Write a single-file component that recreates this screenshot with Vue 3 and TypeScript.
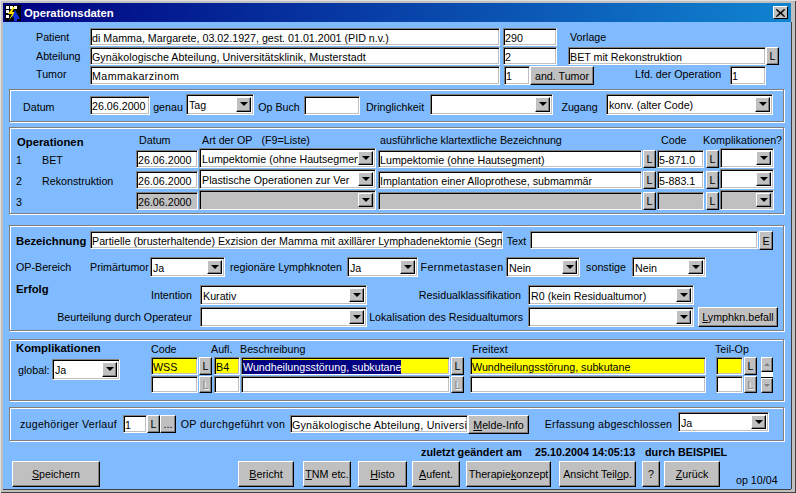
<script setup lang="ts">
interface OpRow {
  num: string
  name: string
  art: string
  text: string
  code: string
  disabled: boolean
}

const ops: OpRow[] = [
  { num: '1', name: 'BET', art: 'Lumpektomie (ohne Hautsegment)', text: 'Lumpektomie (ohne Hautsegment)', code: '5-871.0', disabled: false },
  { num: '2', name: 'Rekonstruktion', art: 'Plastische Operationen zur Ver', text: 'Implantation einer Alloprothese, submammär', code: '5-883.1', disabled: false },
  { num: '3', name: '', art: '', text: '', code: '', disabled: true },
]
</script>

<template>
  <div class="window">
    <div class="titlebar">
      <svg class="app-icon" width="16" height="16" viewBox="0 0 16 16">
        <rect width="16" height="16" fill="#000" />
        <path d="M1 1h3v3H1zM5 1h3v3H5zM9 1h3v3H9zM1 5h3v3H1zM1 10h3v3H1z" fill="#fff" />
        <path d="M8 2 3 9h4l-3 6 7-8H7l3-5z" fill="#ffe000" />
        <path d="M10 5l5 9-3 0 0 2-3 0 0-4-2 1z" fill="#1030e0" />
      </svg>
      <span class="title-text">Operationsdaten</span>
      <div class="close">
        <svg width="9" height="8" viewBox="0 0 9 8"><path d="M0.5 0 4.5 3.2 8.5 0 8.5 1 5.5 4 8.5 7 8.5 8 4.5 4.8 0.5 8 0.5 7 3.5 4 0.5 1z" fill="#000" stroke="#000" stroke-width=".6" /></svg>
      </div>
    </div>

    <div class="content">
      <div class="top">
        <div class="row r-top1">
          <div class="lbl pl33">Patient</div>
          <div class="field">di Mamma, Margarete, 03.02.1927, gest. 01.01.2001 (PID n.v.)</div>
          <div class="field ml3">290</div>
          <div class="lbl pl13">Vorlage</div>
        </div>
        <div class="row r-top2">
          <div class="lbl pl33">Abteilung</div>
          <div class="field wide1">Gynäkologische Abteilung, Universitätsklinik, Musterstadt</div>
          <div class="field ml3">2</div>
          <div class="field ml11">BET mit Rekonstruktion</div>
          <div class="btn">L</div>
        </div>
        <div class="row r-top3">
          <div class="lbl pl33 raise">Tumor</div>
          <div class="field wide4">Mammakarzinom</div>
          <div class="field ml4">1</div>
          <div class="btn">and. Tumor</div>
          <div class="lbl pl41 raise">Lfd. der Operation</div>
          <div class="field">1</div>
        </div>
      </div>

      <section class="panel p-datum">
        <div class="row r-datum">
          <div class="lbl pl12">Datum</div>
          <div class="field low">26.06.2000</div>
          <div class="lbl c">genau</div>
          <div class="combo"><span class="combo-text">Tag</span><i class="arrow"></i></div>
          <div class="lbl c">Op Buch</div>
          <div class="field low"></div>
          <div class="lbl c">Dringlichkeit</div>
          <div class="combo"><span class="combo-text"></span><i class="arrow"></i></div>
          <div class="lbl c">Zugang</div>
          <div class="combo"><span class="combo-text">konv. (alter Code)</span><i class="arrow"></i></div>
        </div>
      </section>

      <section class="panel p-ops">
        <div class="row r-ops-head">
          <div class="lbl strong pl6 pt5">Operationen</div>
          <div class="lbl pl3">Datum</div>
          <div class="lbl pl3">Art der OP <span class="f9">(F9=Liste)</span></div>
          <div class="lbl">ausführliche klartextliche Bezeichnung</div>
          <div class="lbl pl3">Code</div>
          <div class="lbl">Komplikationen?</div>
        </div>
        <div v-for="op in ops" :key="op.num" class="row r-ops" :class="{ off: op.disabled }">
          <div class="lbl pl5">{{ op.num }}</div>
          <div class="lbl">{{ op.name }}</div>
          <div class="field inrow">26.06.2000</div>
          <div class="combo ml1"><span class="combo-text">{{ op.art }}</span><i class="arrow"></i></div>
          <div class="field inrow ml2">{{ op.text }}</div>
          <div class="btn inrow ml1">L</div>
          <div class="field inrow ml1">{{ op.code }}</div>
          <div class="btn inrow ml2">L</div>
          <div class="combo ml1"><span class="combo-text"></span><i class="arrow"></i></div>
        </div>
      </section>

      <section class="panel p-bez">
        <div class="row r-bez1">
          <div class="lbl strong pl5">Bezeichnung</div>
          <div class="field">Partielle (brusterhaltende) Exzision der Mamma mit axillärer Lymphadenektomie (Segmentresektion)</div>
          <div class="lbl c">Text</div>
          <div class="field"></div>
          <div class="btn ml1">E</div>
        </div>
        <div class="row r-bez2">
          <div class="lbl pl5">OP-Bereich</div>
          <div class="lbl">Primärtumor</div>
          <div class="combo"><span class="combo-text">Ja</span><i class="arrow"></i></div>
          <div class="lbl c">regionäre Lymphknoten</div>
          <div class="combo"><span class="combo-text">Ja</span><i class="arrow"></i></div>
          <div class="lbl c wide4">Fernmetastasen</div>
          <div class="combo"><span class="combo-text">Nein</span><i class="arrow"></i></div>
          <div class="lbl c">sonstige</div>
          <div class="combo"><span class="combo-text">Nein</span><i class="arrow"></i></div>
        </div>
        <div class="row r-bez3">
          <div class="lbl strong pl5 erfolg">Erfolg</div>
          <div class="lbl r8">Intention</div>
          <div class="combo"><span class="combo-text">Kurativ</span><i class="arrow"></i></div>
          <div class="lbl r7">Residualklassifikation</div>
          <div class="combo"><span class="combo-text">R0 (kein Residualtumor)</span><i class="arrow"></i></div>
        </div>
        <div class="row r-bez4">
          <div class="lbl r8">Beurteilung durch Operateur</div>
          <div class="combo"><span class="combo-text"></span><i class="arrow"></i></div>
          <div class="lbl r5">Lokalisation des Residualtumors</div>
          <div class="combo"><span class="combo-text"></span><i class="arrow"></i></div>
          <div class="btn ml4"><span><u>L</u>ymphkn.befall</span></div>
        </div>
      </section>

      <section class="panel p-kompl">
        <div class="kompl-left">
          <div class="lbl strong kompl-title">Komplikationen</div>
          <div class="row r-global">
            <div class="lbl">global:</div>
            <div class="combo"><span class="combo-text">Ja</span><i class="arrow"></i></div>
          </div>
        </div>
        <div class="kompl-right">
          <div class="row r-kompl-head">
            <div class="lbl">Code</div>
            <div class="lbl">Aufl.</div>
            <div class="lbl">Beschreibung</div>
            <div class="lbl">Freitext</div>
            <div class="lbl">Teil-Op</div>
          </div>
          <div class="kompl-body">
            <div class="kompl-rows">
              <div class="row r-kompl">
                <div class="field hl">WSS</div>
                <div class="btn ml1">L</div>
                <div class="field hl ml2">B4</div>
                <div class="field hl ml1"><span class="sel">Wundheilungsstörung, subkutane</span></div>
                <div class="btn ml1">L</div>
                <div class="field hl ml6">Wundheilungsstörung, subkutane</div>
                <div class="field hl ml10"></div>
                <div class="btn ml1">L</div>
              </div>
              <div class="row r-kompl r-kompl2">
                <div class="field"></div>
                <div class="btn ml1 dim">L</div>
                <div class="field ml2"></div>
                <div class="field ml1"></div>
                <div class="btn ml1 dim">L</div>
                <div class="field ml6"></div>
                <div class="field ml10"></div>
                <div class="btn ml1 dim">L</div>
              </div>
            </div>
            <div class="scroll">
              <div class="btn sb-btn"><i class="tri up"></i></div>
              <div class="sb-track"></div>
              <div class="btn sb-btn"><i class="tri down"></i></div>
            </div>
          </div>
        </div>
      </section>

      <section class="panel p-verlauf">
        <div class="row r-verlauf">
          <div class="lbl pl9 wide2">zugehöriger Verlauf</div>
          <div class="field low1">1</div>
          <div class="btn low1">L</div>
          <div class="btn low1">...</div>
          <div class="lbl c wide3">OP durchgeführt von</div>
          <div class="field low1 wide2">Gynäkologische Abteilung, Universitätsklinik</div>
          <div class="btn lowb"><span><u>M</u>elde-Info</span></div>
          <div class="lbl c wide2 erfassung">Erfassung abgeschlossen</div>
          <div class="combo"><span class="combo-text">Ja</span><i class="arrow"></i></div>
        </div>
      </section>

      <div class="status">
        <span class="st-a">zuletzt geändert am</span>
        <span class="st-b">25.10.2004 14:05:13</span>
        <span>durch BEISPIEL</span>
      </div>

      <div class="row r-actions">
        <div class="btn"><span><u>S</u>peichern</span></div>
        <div></div>
        <div class="btn"><span><u>B</u>ericht</span></div>
        <div class="btn ml9"><span><u>T</u>NM etc.</span></div>
        <div class="btn ml7"><span><u>H</u>isto</span></div>
        <div class="btn ml5"><span><u>A</u>ufent.</span></div>
        <div class="btn ml6"><span>Therapie<u>k</u>onzept</span></div>
        <div class="btn ml8"><span>Ansicht Teil<u>o</u>p.</span></div>
        <div class="btn ml6">?</div>
        <div class="btn ml4"><span><u>Z</u>urück</span></div>
        <div class="lbl version">op 10/04</div>
      </div>
    </div>
  </div>
</template>

<style>
html, body { margin: 0; padding: 0; background: #c0c0c0; }
</style>

<style scoped>
.window {
  box-sizing: border-box;
  width: 796px;
  height: 493px;
  padding: 3px 5px 3px 3px;
  background: #c0c0c0;
  box-shadow: inset 1px 1px 0 #dfdfdf, inset -1px -1px 0 #404040;
  font: 10.7px/14px "Liberation Sans", Arial, sans-serif;
  color: #000;
  overflow: hidden;
}
.titlebar {
  display: flex;
  align-items: center;
  height: 19px;
  background: linear-gradient(90deg, #000080, #1084d0);
  color: #fff;
  padding: 0 3px 0 2px;
}
.app-icon { flex: none; }
.title-text { margin-left: 3px; font-weight: bold; font-size: 11.3px; }
.close {
  margin-left: auto;
  box-sizing: border-box;
  width: 15px;
  height: 13px;
  display: flex;
  align-items: center;
  justify-content: center;
  background: #c0c0c0;
  border: 1px solid;
  border-color: #fff #000 #000 #fff;
}
.content {
  height: 467px;
  background: #80bbff;
  box-shadow: 1px 0 0 #404040, 0 1px 0 #404040;
  padding-top: 6px;
  box-sizing: border-box;
}
.row { display: grid; }
.row > * { min-width: 0; }

.lbl { white-space: nowrap; display: flex; align-items: center; }
.lbl.strong { font-weight: bold; font-size: 11.3px; }
.c { justify-content: center; }
.r8, .r7, .r5 { justify-content: flex-end; }
.r8 { padding-right: 8px; }
.r7 { padding-right: 7px; }
.r5 { padding-right: 5px; }
.pl3 { padding-left: 3px; }
.pl5 { padding-left: 5px; }
.pl6 { padding-left: 6px; }
.pl9 { padding-left: 9px; }
.pl12 { padding-left: 12px; }
.pl13 { padding-left: 13px; }
.pl33 { padding-left: 33px; }
.pl41 { padding-left: 41px; }
.pt5 { padding-top: 5px; }
.raise { padding-bottom: 3px; }
.ml1 { margin-left: 1px; }
.ml2 { margin-left: 2px; }
.ml3 { margin-left: 3px; }
.ml4 { margin-left: 4px; }
.ml5 { margin-left: 5px; }
.ml6 { margin-left: 6px; }
.ml7 { margin-left: 7px; }
.ml8 { margin-left: 8px; }
.ml9 { margin-left: 9px; }
.ml10 { margin-left: 10px; }
.ml11 { margin-left: 11px; }
.wide1 { letter-spacing: .06px; }
.wide2 { letter-spacing: .22px; }
.wide3 { letter-spacing: .32px; }
.wide4 { letter-spacing: .42px; }
.r-verlauf .erfassung { padding-left: 10px; }

.field {
  box-sizing: border-box;
  background: #fff;
  border: 1px solid;
  border-color: #808080 #fff #fff #808080;
  box-shadow: inset 1px 1px 0 #000, inset -1px -1px 0 #c0c0c0;
  padding: 1px 0 0 1px;
  display: flex;
  align-items: center;
  white-space: nowrap;
  overflow: hidden;
}
.field.hl { background: #ffff00; }
.sel { background: #000080; color: #fff; }

.btn {
  box-sizing: border-box;
  background: #c0c0c0;
  border: 1px solid;
  border-color: #fff #000 #000 #fff;
  box-shadow: inset -1px -1px 0 #808080;
  display: flex;
  align-items: center;
  justify-content: center;
  white-space: nowrap;
}
.btn.dim { color: #808080; text-shadow: 1px 1px 0 #fff; }

.combo {
  box-sizing: border-box;
  background: #fff;
  border: 1px solid;
  border-color: #808080 #fff #fff #808080;
  box-shadow: inset 1px 1px 0 #000, inset -1px -1px 0 #c0c0c0;
  padding: 2px;
  display: flex;
  align-items: center;
  min-width: 0;
  height: 20px;
}
.combo-text { flex: 1; min-width: 0; overflow: hidden; white-space: nowrap; padding-top: 1px; }
.arrow {
  flex: none;
  box-sizing: border-box;
  align-self: stretch;
  width: 15px;
  background: #c0c0c0;
  border: 1px solid;
  border-color: #fff #000 #000 #fff;
  box-shadow: inset -1px -1px 0 #808080;
  position: relative;
}
.arrow::after {
  content: "";
  position: absolute;
  left: 2.5px;
  top: 4px;
  border: 4px solid transparent;
  border-top: 4px solid #000;
  border-bottom: 0;
}

.panel {
  box-sizing: border-box;
  width: 775px;
  margin-left: 6px;
  border: 1px solid #808080;
  outline: 0;
  box-shadow: inset 1px 1px 0 #fff, 1px 1px 0 #fff;
  padding: 1px;
}

.top .row { margin-bottom: 1px; }
.r-top1 { height: 18px; grid-template-columns: 87px 410px 57px 1fr; }
.r-top2 { height: 18px; grid-template-columns: 87px 410px 57px 209px 13px; }
.r-top3 { height: 19px; grid-template-columns: 87px 410px 30px 64px 136px 36px; }

.p-datum { height: 33px; margin-top: 4px; padding-top: 4px; }
.r-datum { height: 22px; grid-template-columns: 79px 60px 36px 68px 50px 56px 70px 123px 53px 167px; align-items: start; }
.r-datum .lbl { align-self: stretch; padding-top: 3px; }
.r-datum .combo { height: 21px; }
.low { height: 19px; margin-top: 2px; }

.p-ops { height: 87px; margin-top: 5px; }
.r-ops-head { height: 18px; padding-top: 1px; grid-template-columns: 125px 63px 181px 278px 45px 1fr; }
.f9 { margin-left: 9px; }
.r-ops { height: 21px; grid-template-columns: 31px 94px 62px 178px 266px 14px 48px 15px 55px; align-items: start; }
.r-ops .lbl { align-self: stretch; padding-top: 3px; }
.inrow { height: 18px; margin-top: 2px; }
.r-ops.off .field, .r-ops.off .combo { background: #c0c0c0; }

.p-bez { height: 106px; margin-top: 11px; padding-top: 5px; }
.r-bez1 { height: 19px; grid-template-columns: 79px 413px 27px 228px 15px; }
.r-bez1 .field { height: 18px; }
.r-bez2 { height: 20px; margin-top: 7px; grid-template-columns: 79px 60px 75px 122px 71px 88px 74px 52px 74px; }
.r-bez3 { height: 24px; margin-top: 4px; grid-template-columns: 81px 108px 167px 161px 166px; align-items: end; }
.r-bez3 .lbl { height: 20px; }
.r-bez3 .erfolg { height: 16px; align-self: start; }
.r-bez4 { height: 20px; margin-top: 2px; grid-template-columns: 189px 167px 161px 166px 84px; }

.p-kompl { height: 62px; margin-top: 8px; display: flex; }
.kompl-left { width: 140px; flex: none; }
.kompl-title { padding-left: 5px; height: 14px; }
.r-global { margin-top: 4px; padding-left: 7px; grid-template-columns: 34px 68px; }
.r-global .combo { height: 21px; }
.r-kompl-head { height: 16px; grid-template-columns: 60px 29px 232px 243px 1fr; }
.kompl-body { display: flex; }
.r-kompl { height: 18px; grid-template-columns: 47px 14px 28px 210px 14px 242px 37px 14px; }
.r-kompl2 { height: 17px; margin-top: 1px; }
.scroll { margin-left: 4px; width: 12px; display: flex; flex-direction: column; }
.sb-btn { height: 15px; flex: none; }
.sb-track { height: 6px; background: #fff; border-bottom: 1px solid #000; box-sizing: border-box; }
.tri { width: 0; height: 0; border: 3px solid transparent; }
.tri.up { border-top: 0; border-bottom: 3px solid #808080; }
.tri.down { border-bottom: 0; border-top: 3px solid #808080; }

.p-verlauf { height: 34px; margin-top: 6px; padding-top: 4px; }
.r-verlauf { height: 22px; grid-template-columns: 112px 24px 13px 16px 114px 178px 61px 149px 91px; align-items: start; }
.r-verlauf .lbl { align-self: stretch; padding-top: 1px; }
.low1 { height: 18px; margin-top: 3px; }
.lowb { height: 19px; margin-top: 3px; }

.status { display: flex; height: 20px; line-height: 23px; padding-left: 418px; font-weight: bold; font-size: 10.8px; white-space: nowrap; }
.st-a { width: 114px; }
.st-b { width: 110px; }
.r-actions {
  padding-left: 9px;
  height: 20px;
  grid-template-columns: 88px 138px 56px 57px 56px 53px 91px 85px 24px 60px 1fr;
}
.version { padding-left: 16px; margin-top: 12px; height: 14px; }
</style>
